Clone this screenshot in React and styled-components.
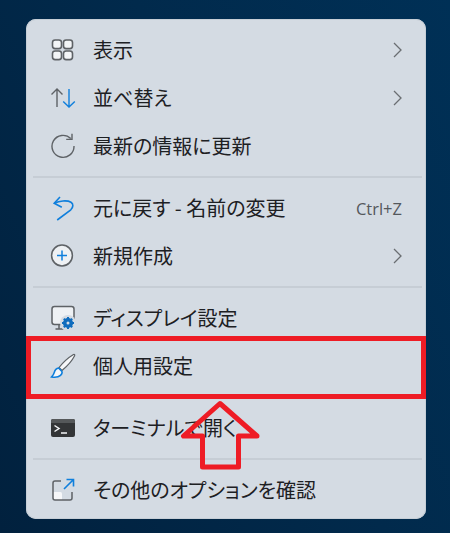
import React from "react";
import styled, { createGlobalStyle } from "styled-components";

const Global = createGlobalStyle`
  html, body { margin: 0; padding: 0; }
  body { background: #012746; }
`;

const Desktop = styled.div`
  position: relative;
  width: 450px;
  height: 533px;
  overflow: hidden;
  padding: 19px 24px 14px 26px;
  box-sizing: border-box;
  background: linear-gradient(65deg, #01213e 0%, #012a4c 55%, #003056 100%);
`;

const Menu = styled.div`
  width: 400px;
  height: 500px;
  box-sizing: border-box;
  padding: 7px 0 5px;
  border-radius: 10px;
  background: #d4dbe3;
  box-shadow: inset 0 0 0 1px #c6ced6;
  font-family: "Noto Sans CJK JP", "Noto Sans", sans-serif;
  font-feature-settings: "palt";
`;

const Row = styled.div`
  height: 48px;
  display: flex;
  align-items: center;
  padding: 0 24px 0 24px;
  color: #1d2023;
`;

const IconBox = styled.span`
  flex: none;
  width: 26px;
  height: 26px;
  margin-right: 17px;
  display: flex;
  align-items: center;
  justify-content: center;
  svg { display: block; }
`;

const Label = styled.span`
  flex: 1;
  font-size: 20px;
  line-height: 48px;
  font-weight: 400;
  letter-spacing: ${(p) => p.$track || 0}px;
  white-space: nowrap;
`;

const Shortcut = styled.span`
  font-family: "Open Sans", "Noto Sans", sans-serif;
  font-size: 16.5px;
  color: #54585c;
`;

const Divider = styled.div`
  height: 2px;
  margin: 6px 4px 6px 7px;
  background: #c6cdd5;
`;

const Highlight = styled.div`
  position: absolute;
  left: 26px;
  top: 336px;
  width: 400px;
  height: 63px;
  box-sizing: border-box;
  border: 5px solid #ee1c25;
`;

const ArrowMark = styled.svg`
  position: absolute;
  left: 175px;
  top: 395px;
`;

const GREY = "#5e6266";
const BLUE = "#0f7fdc";

const Icon = ({ children }) => (
  <svg width="26" height="26" viewBox="0 0 26 26" fill="none">
    {children}
  </svg>
);

const ViewIcon = () => (
  <Icon>
    {[[2.5, 3], [13.5, 3], [2.5, 14], [13.5, 14]].map(([x, y]) => (
      <rect key={x + "-" + y} x={x} y={y} width="9" height="8.6" rx="2.6" fill="#f3f5f7" stroke={GREY} strokeWidth="1.6" />
    ))}
  </Icon>
);

const SortIcon = () => (
  <Icon>
    <path d="M7 22V4M1.5 9.5 7 4l5.5 5.5" stroke={GREY} strokeWidth="1.4" />
    <path d="M19 4v18M13.2 16.5 19 22l5.8-5.5" stroke={BLUE} strokeWidth="1.4" />
  </Icon>
);

const RefreshIcon = () => (
  <Icon>
    <path d="M20.8 5.6A11 11 0 1 0 24 13" stroke={GREY} strokeWidth="1.4" />
    <path d="M22 .8V6.4h-5.8" stroke={GREY} strokeWidth="1.4" />
  </Icon>
);

const UndoIcon = () => (
  <Icon>
    <path d="M10 2 4.2 8.2l7.6 4" stroke={BLUE} strokeWidth="1.6" />
    <path d="M4.6 8.2C9 5.8 17 5 21 7.2c2.6 1.6 2.4 5-.2 7.6L7.2 25" stroke={BLUE} strokeWidth="1.6" />
  </Icon>
);

const NewIcon = () => (
  <Icon>
    <circle cx="12" cy="12.5" r="10.4" fill="#eef1f4" stroke={GREY} strokeWidth="1.5" />
    <path d="M12 7.5v10M7 12.5h10" stroke={BLUE} strokeWidth="1.5" />
  </Icon>
);

const DisplayIcon = () => (
  <Icon>
    <rect x="2" y="1.5" width="22" height="18" rx="2.5" fill="#eef1f4" stroke={GREY} strokeWidth="1.5" />
    <path d="M9 19.5v4.5M5.5 24h8" stroke={GREY} strokeWidth="1.5" />
    <circle cx="18" cy="18" r="8" fill="#d4dbe3" />
    <circle cx="18" cy="18" r="3.6" fill="none" stroke="#0f6cbd" strokeWidth="3" />
    <path d="M18 12v12M12 18h12M13.8 13.8l8.4 8.4M22.2 13.8l-8.4 8.4" stroke="#0f6cbd" strokeWidth="2" />
    <circle cx="18" cy="18" r="1.5" fill="#d4dbe3" />
  </Icon>
);

const BrushIcon = () => (
  <Icon>
    <path d="M23.5 1.5C24.5 1 25 2 24.6 2.8 22 8 17.5 13 12 17.5L9 14.5C13 9.5 18.5 4.5 23.5 1.5Z" fill="#f6f7f9" stroke={GREY} strokeWidth="1.2" />
    <path d="M8.6 15c-3 .4-3.8 2.4-4.4 4.6-.4 1.6-1.4 3-2.7 4.4 3.6.6 7 .2 9-1.6 1.4-1.3 1.8-3.2 1.2-4.2Z" fill="#f6f7f9" stroke={BLUE} strokeWidth="1.6" />
  </Icon>
);

const TerminalIcon = () => (
  <Icon>
    <rect x="1" y="4" width="24" height="18" rx="2" fill="#333537" />
    <path d="M3 4h20a2 2 0 0 1 2 2v2H1V6a2 2 0 0 1 2-2Z" fill="#55585a" />
    <path d="M4.5 10.5 9 13.5l-4.500 3" stroke="#f4f6f8" strokeWidth="1.5" />
    <path d="M11 18h6" stroke="#f4f6f8" strokeWidth="1.5" />
  </Icon>
);

const OptionsIcon = () => (
  <Icon>
    <path d="M3 15h7.500a1.500 1.500 0 0 1 1.500 1.500V23H5a2 2 0 0 1-2-2Z" fill="#f6f7f9" />
    <path d="M11 4H5a2 2 0 0 0-2 2v15a2 2 0 0 0 2 2h15a2 2 0 0 0 2-2v-6" stroke={GREY} strokeWidth="1.5" />
    <path d="M3 15h7.500a1.500 1.500 0 0 1 1.500 1.500V23" stroke={GREY} strokeWidth="0" />
    <path d="M14 12 23 3M16.500 2.500H23.500V9.500" stroke={BLUE} strokeWidth="1.6" />
  </Icon>
);

const Chevron = () => (
  <svg width="9" height="16" viewBox="0 0 9 16" fill="none">
    <path d="M1 1l7 7-7 7" stroke="#6a6e72" strokeWidth="1.3" />
  </svg>
);

const Item = ({ icon, label, chevron, shortcut, track }) => (
  <Row>
    <IconBox>{icon}</IconBox>
    <Label $track={track}>{label}</Label>
    {shortcut && <Shortcut>{shortcut}</Shortcut>}
    {chevron && <Chevron />}
  </Row>
);

export default function App() {
  return (
    <>
      <Global />
      <Desktop>
        <Menu>
          <Item icon={<ViewIcon />} label="表示" chevron />
          <Item icon={<SortIcon />} label="並べ替え" chevron />
          <Item icon={<RefreshIcon />} label="最新の情報に更新" />
          <Divider />
          <Item icon={<UndoIcon />} label="元に戻す - 名前の変更" shortcut="Ctrl+Z" />
          <Item icon={<NewIcon />} label="新規作成" chevron />
          <Divider />
          <Item icon={<DisplayIcon />} label="ディスプレイ設定" />
          <Item icon={<BrushIcon />} label="個人用設定" />
          <Divider />
          <Item icon={<TerminalIcon />} label="ターミナルで開く" />
          <Divider />
          <Item icon={<OptionsIcon />} label="その他のオプションを確認" />
        </Menu>
        <Highlight />
        <ArrowMark width="90" height="80" viewBox="0 0 90 80" fill="none">
          <path
            d="M45 8.500 8.500 41H27.500V72H63.500V41H82Z"
            stroke="#ee1c25"
            strokeWidth="5"
            strokeLinejoin="round"
          />
        </ArrowMark>
      </Desktop>
    </>
  );
}
